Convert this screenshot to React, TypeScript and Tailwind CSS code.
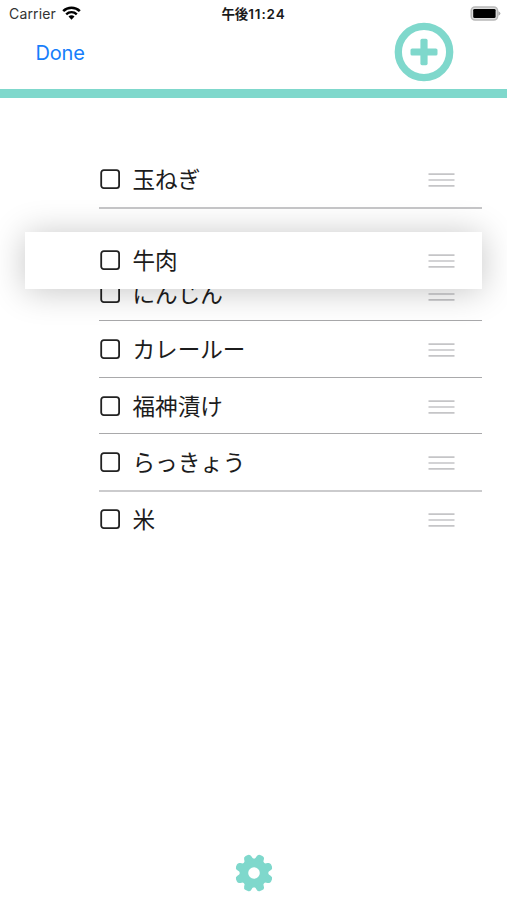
import React from 'react';

const rows = [
  { label: '玉ねぎ', line: 'h-[58px] border-b-2 border-[#c6c6c8]' },
  { label: '', line: 'h-[56px] border-b border-[#b0b0b2]' },
  { label: 'にんじん', line: 'h-[56px] border-b border-[#a9a9ab]' },
  { label: 'カレールー', line: 'h-[57px] border-b border-[#a9a9ab]' },
  { label: '福神漬け', line: 'h-[56px] border-b border-[#a9a9ab]' },
  { label: 'らっきょう', line: 'h-[58px] border-b-2 border-[#cbcbcd]' },
  { label: '米', line: 'h-[54px]' },
];

function RowContent({ label }: { label: string }) {
  return (
    <>
      <svg className="block h-[20px] w-[20px] shrink-0" viewBox="0 0 20 20" fill="none">
        <rect x="1.2" y="1.2" width="17.9" height="17.9" rx="2.6" stroke="#222" strokeWidth="1.8" />
      </svg>
      <span className="ml-[12.5px] flex-1 pt-[2px] whitespace-nowrap text-[22.6px] leading-[32px] text-[#1c1c1c]">{label}</span>
      <svg className="mr-[27.5px] block h-[16px] w-[27px] shrink-0" viewBox="0 0 27 16">
        <path d="M.5 3.2H26.5M.5 9H26.5M.5 14.8H26.5" stroke="#c5c5c7" strokeWidth="1.7" />
      </svg>
    </>
  );
}

function Gear() {
  const teeth = [22.5, 67.5, 112.5, 157.5, 202.5, 247.5, 292.5, 337.5];
  return (
    <svg className="block h-[40px] w-[40px]" viewBox="-20 -20 40 40">
      <circle r="10.1" fill="none" stroke="#7fd8cc" strokeWidth="8.6" />
      {teeth.map((a) => (
        <path
          key={a}
          d="M-5.2-12.5Q-4.1-14-3.9-16.4Q-3.6-18.8-1.2-19H1.2Q3.6-18.8 3.9-16.4Q4.1-14 5.2-12.5Z"
          transform={`rotate(${a})`}
          fill="#7fd8cc"
        />
      ))}
    </svg>
  );
}

export default function App() {
  return (
    <div className="flex h-[900px] w-[507px] flex-col overflow-hidden bg-white font-['Inter','Noto_Sans_CJK_JP',sans-serif]">
      <header className="h-[98px] shrink-0 border-b-[9px] border-[#7fd8cc]">
        <div className="grid h-[22px] grid-cols-3 items-center pt-[5px]">
          <div className="flex items-center pl-[9px]">
            <span className="text-[14px] leading-[18px] tracking-[0.15px] text-[#333]">Carrier</span>
            <svg className="ml-[6px] block h-[14px] w-[19px] -translate-y-px" viewBox="0 0 19 14" fill="none">
              <path d="M1.2 5.1A11.9 11.9 0 0 1 17.8 5.1" stroke="#000" strokeWidth="2.6" />
              <path d="M4.2 8.3A7.6 7.6 0 0 1 14.8 8.3" stroke="#000" strokeWidth="2.4" />
              <path d="M9.5 13.7L6.5 10.6A4.2 4.2 0 0 1 12.5 10.6Z" fill="#000" />
            </svg>
          </div>
          <div className="text-center text-[13.5px] leading-[18px] font-semibold tracking-[0.9px] whitespace-nowrap text-[#1a1a1a]">
            <span className="font-bold tracking-[-0.1px]">午後</span>11:24
          </div>
          <div className="flex justify-end pr-[6px]">
            <svg className="block h-[15px] w-[31px] -translate-y-px" viewBox="0 0 31 15">
              <rect x="1.2" y="1" width="26.4" height="13" rx="3.8" fill="#ddd" stroke="#b8b8b8" strokeWidth="1.5" />
              <rect x="3.2" y="2.9" width="22.4" height="9.2" rx="1.4" fill="#000" />
              <path d="M28.4 5.2Q30.4 6 30.4 7.5T28.4 9.8Z" fill="#aaa" />
            </svg>
          </div>
        </div>
        <div className="flex items-start justify-between pr-[53px] pl-[35.5px]">
          <button className="mt-[18px] text-[20px] leading-[26px] tracking-[-0.2px] text-[#167efb]">Done</button>
          <svg className="block h-[60px] w-[60px]" viewBox="0 0 60 60" fill="none">
            <circle cx="30" cy="30" r="25.7" stroke="#7fd8cc" strokeWidth="7.3" />
            <rect x="16.5" y="26.4" width="27" height="7.2" rx="1.6" fill="#7fd8cc" />
            <rect x="26.4" y="16.8" width="7.2" height="26.4" rx="1.6" fill="#7fd8cc" />
          </svg>
        </div>
      </header>

      <main className="relative mt-[53px] flex flex-1 flex-col pr-[25px] pl-[99px]">
        {rows.map(({ label, line }, i) => (
          <div key={i} className={`flex shrink-0 items-center pl-px ${line}`}>
            {label && <RowContent label={label} />}
          </div>
        ))}
        <div className="absolute top-[81px] right-[25px] left-[25px] flex h-[57px] items-center bg-white pb-px pl-[75px] shadow-[0_2px_34px_rgba(0,0,0,0.23)]">
          <RowContent label="牛肉" />
        </div>
      </main>

      <footer className="flex h-[47px] shrink-0 justify-center">
        <Gear />
      </footer>
    </div>
  );
}
